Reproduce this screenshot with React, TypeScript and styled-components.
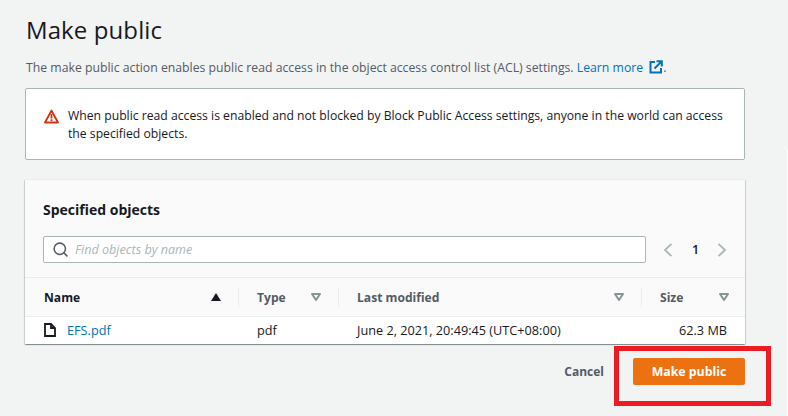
import styled, { createGlobalStyle } from 'styled-components';
import { Search } from 'lucide-react';

const Global = createGlobalStyle`
  html, body { margin:0; padding:0; background:#f2f3f3; }
  body { font-family:"Open Sans","Noto Sans",Arial,sans-serif; color:#16191f; }
  * { box-sizing:border-box; }
`;

const Page = styled.div`
  position:relative; width:788px; height:416px; overflow:hidden; padding:15px 43px 0 25px;
  &::after { content:''; position:absolute; right:0; top:150px; bottom:0; width:1px; background:#fff; }
`;
const Title = styled.h1`margin:0 0 0 1px; font-size:24px; font-weight:400; line-height:30px; color:#16191f; letter-spacing:.1px;`;
const Intro = styled.p`margin:13px 0 0 1px; font-size:12.25px; line-height:20px; color:#545b64; white-space:nowrap;`;
const LearnMore = styled.a`color:#0073bb; text-decoration:none;`;
const ExternalIcon = styled.svg`width:14px; height:14px; margin-left:6px; vertical-align:-2px;`;

const Alert = styled.div`display:flex; gap:9px; margin-top:10px; height:72px; padding:17px 10px 0 18px; background:#fff; border:1px solid #aab7b8; border-radius:2px;`;
const AlertIcon = styled.svg`width:15px; height:15px; flex:none; margin-top:3px;`;
const AlertText = styled.div`font-size:12.2px; line-height:18px; color:#16191f; padding-top:1px;`;

const Card = styled.section`margin-top:19px; background:#fafafa; border-top:1px solid #eaeded; border-radius:1px; box-shadow:0 1px 1px 0 rgba(0,28,36,.3), 1px 1px 1px 0 rgba(0,28,36,.15), -1px 1px 1px 0 rgba(0,28,36,.15);`;
const CardHead = styled.div`padding:20px 18px 0 18px; height:98px; border-bottom:1px solid #eaeded;`;
const CardTitle = styled.h2`margin:0; font-size:14px; line-height:20px; font-weight:700; color:#16191f;`;
const Toolbar = styled.div`display:flex; align-items:center; margin-top:16px;`;
const SearchBox = styled.div`display:flex; align-items:center; gap:6px; width:604px; height:27px; padding:0 8px; background:#fff; border:1px solid #aab7b8; border-radius:2px; color:#545b64;`;
const Placeholder = styled.span`font-size:12.6px; font-style:italic; color:#aab7b8;`;
const Pager = styled.div`display:flex; align-items:center; margin-left:17px; color:#aab7b8;`;
const PageNum = styled.span`width:44px; text-align:center; font-size:12.6px; font-weight:600; color:#16191f; padding-left:1px;`;
const Chevron = styled.svg`width:10px; height:14px; flex:none;`;

const Row = styled.div<{ $head?: boolean }>`
  display:grid; grid-template-columns:214px 100px 303px 103px; align-items:center;
  height:${({ $head }) => ($head ? '39px' : '27px')};
  padding-bottom:${({ $head }) => ($head ? '0' : '2px')};
  background:${({ $head }) => ($head ? '#fafafa' : '#fff')};
  border-bottom:${({ $head }) => ($head ? '1px solid #eaeded' : '0')};
`;
const HeadCell = styled.div<{ $active?: boolean; $last?: boolean }>`
  display:flex; align-items:center; justify-content:space-between; height:19px; padding:0 ${({ $last }) => ($last ? '16px' : '17px')} 0 ${({ $active }) => ($active ? '19px' : '18px')};
  font-size:12.1px; font-weight:700; color:${({ $active }) => ($active ? '#16191f' : '#545b64')};
  border-right:${({ $last }) => ($last ? '0' : '1px solid #eaeded')};
`;
const SortIcon = styled.svg`width:10px; height:8px; flex:none;`;
const Cell = styled.div<{ $right?: boolean }>`
  display:flex; align-items:center; gap:11px; padding:0 18px; font-size:12.7px; color:#16191f;
  justify-content:${({ $right }) => ($right ? 'flex-end' : 'flex-start')};
`;
const FileLink = styled.a`color:#0073bb; text-decoration:none;`;
const FileIcon = styled.svg`width:12px; height:14px; flex:none; margin-left:1px;`;

const Actions = styled.div`display:flex; justify-content:flex-end; align-items:center; gap:29px; margin-top:14px;`;
const Cancel = styled.button`border:0; background:none; padding:0; font:700 12px "Open Sans","Noto Sans",sans-serif; color:#545b64;`;
const Primary = styled.button`width:112px; height:27px; border:0; border-radius:2px; background:#ec7211; color:#fff; font:700 12.3px "Open Sans","Noto Sans",sans-serif;`;
const Highlight = styled.div`position:absolute; left:614px; top:346px; width:157px; height:60px; border:5px solid #ed1c24;`;

const Sort = ({ active }: { active?: boolean }) => (
  <SortIcon viewBox="0 0 10 8">
    {active
      ? <path d="M5 0 10 8H0Z" fill="#16191f" />
      : <path d="M1 1h8L5 7Z" fill="none" stroke="#879596" strokeWidth="2" strokeLinejoin="round" />}
  </SortIcon>
);

export default function App() {
  return (
    <Page>
      <Global />
      <Title>Make public</Title>
      <Intro>
        The make public action enables public read access in the object access control list (ACL) settings.{' '}
        <LearnMore href="#">
          Learn more
          <ExternalIcon viewBox="0 0 14 14" fill="none" stroke="#0073bb" strokeWidth="2">
            <path d="M6 2H1.500v10.500h10.500V8" />
            <path d="M7.500 1.200h5.300v5.300M12.500 1.500 5.500 8.500" />
          </ExternalIcon>
        </LearnMore>.
      </Intro>

      <Alert>
        <AlertIcon viewBox="0 0 15 15">
          <path d="M7.500 1.500 14 13.500H1Z" fill="none" stroke="#d13212" strokeWidth="1.800" strokeLinejoin="round" />
          <path d="M7.500 5v4.500M7.500 10.300v1.700" stroke="#d13212" strokeWidth="1.800" />
        </AlertIcon>
        <AlertText>
          When public read access is enabled and not blocked by Block Public Access settings, anyone in the world can access the specified objects.
        </AlertText>
      </Alert>

      <Card>
        <CardHead>
          <CardTitle>Specified objects</CardTitle>
          <Toolbar>
            <SearchBox>
              <Search size={17} strokeWidth={2.2} />
              <Placeholder>Find objects by name</Placeholder>
            </SearchBox>
            <Pager>
              <Chevron viewBox="0 0 10 14" fill="none" stroke="currentColor" strokeWidth="1.800"><path d="M8.500 .8 2 7l6.500 6.200" /></Chevron>
              <PageNum>1</PageNum>
              <Chevron viewBox="0 0 10 14" fill="none" stroke="currentColor" strokeWidth="1.800"><path d="M1.500 .8 8 7l-6.500 6.200" /></Chevron>
            </Pager>
          </Toolbar>
        </CardHead>
        <Row $head>
          <HeadCell $active>Name<Sort active /></HeadCell>
          <HeadCell>Type<Sort /></HeadCell>
          <HeadCell>Last modified<Sort /></HeadCell>
          <HeadCell $last>Size<Sort /></HeadCell>
        </Row>
        <Row>
          <Cell>
            <FileIcon viewBox="0 0 12 14" fill="none" stroke="#16191f" strokeWidth="1.800">
              <path d="M1 1h6l4 4v8H1Z" />
              <path d="M7 1v4h4" />
            </FileIcon>
            <FileLink href="#">EFS.pdf</FileLink>
          </Cell>
          <Cell>pdf</Cell>
          <Cell>June 2, 2021, 20:49:45 (UTC+08:00)</Cell>
          <Cell $right>62.3 MB</Cell>
        </Row>
      </Card>

      <Actions>
        <Cancel>Cancel</Cancel>
        <Primary>Make public</Primary>
      </Actions>
      <Highlight />
    </Page>
  );
}
